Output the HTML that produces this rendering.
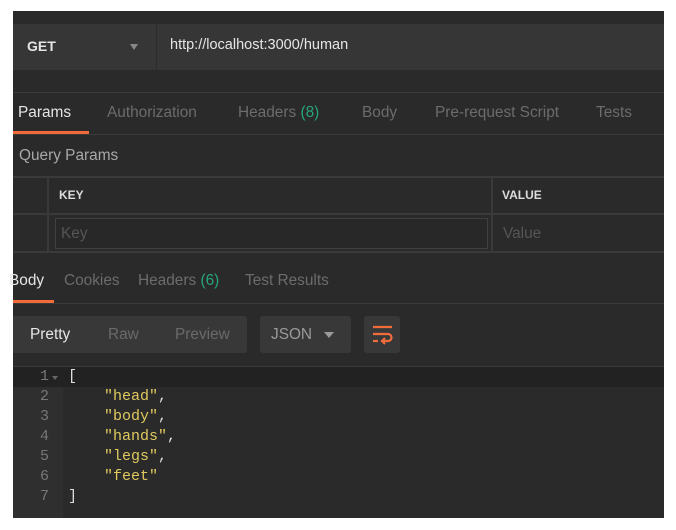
<!DOCTYPE html><html><head><style>
body{margin:0;width:676px;height:530px;background:#fff;position:relative;overflow:hidden;font-family:"Liberation Sans",sans-serif;}
.a{position:absolute}
.t{position:absolute;white-space:nowrap;font-size:15.4px;color:#6c6c6c}
.code{font-family:"Liberation Mono",monospace;font-size:15px;}
</style></head><body>
<div class="a" style="left:13px;top:11px;width:651px;height:507px;background:#2a2a2a"></div>
<div class="a" style="left:13px;top:24px;width:651px;height:46px;background:#363636"></div>
<div class="a" style="left:156px;top:24px;width:1px;height:46px;background:#2c2c2c"></div>
<div class="t" style="left:27px;top:38px;color:#e6e6e6;font-weight:bold;font-size:14px">GET</div>
<div class="a" style="left:130px;top:44px;border-left:4px solid transparent;border-right:4px solid transparent;border-top:6px solid #888"></div>
<div class="t" style="left:170px;top:37px;color:#e6e6e6;font-size:14.5px">http://localhost:3000/human</div>
<div class="a" style="left:13px;top:92px;width:651px;height:1px;background:#3a3a3a"></div>
<div class="t" style="left:18px;top:104px;color:#e6e6e6">Params</div>
<div class="t" style="left:107px;top:104px">Authorization</div>
<div class="t" style="left:238px;top:104px">Headers <span style="color:#26a77a">(8)</span></div>
<div class="t" style="left:362px;top:104px">Body</div>
<div class="t" style="left:435px;top:104px">Pre-request Script</div>
<div class="t" style="left:596px;top:104px">Tests</div>
<div class="a" style="left:13px;top:131px;width:76px;height:3px;background:#f26b3a"></div>
<div class="a" style="left:13px;top:134px;width:651px;height:1px;background:#3a3a3a"></div>
<div class="t" style="left:19px;top:147px;color:#a8a8a8">Query Params</div>
<div class="a" style="left:13px;top:176px;width:651px;height:2px;background:#3a3a3a"></div>
<div class="a" style="left:47px;top:176px;width:2px;height:76px;background:#3a3a3a"></div>
<div class="a" style="left:491px;top:176px;width:2px;height:76px;background:#3a3a3a"></div>
<div class="t" style="left:59px;top:188px;color:#dcdcdc;font-weight:bold;font-size:12px">KEY</div>
<div class="t" style="left:502px;top:188px;color:#dcdcdc;font-weight:bold;font-size:12px">VALUE</div>
<div class="a" style="left:13px;top:213px;width:651px;height:2px;background:#3a3a3a"></div>
<div class="a" style="left:55px;top:218px;width:433px;height:31px;border:1px solid #404040;box-sizing:border-box;background:#282828"></div>
<div class="t" style="left:61px;top:225px;color:#555">Key</div>
<div class="t" style="left:503px;top:225px;color:#555">Value</div>
<div class="a" style="left:13px;top:251px;width:651px;height:2px;background:#3a3a3a"></div>
<div class="t" style="left:9px;top:272px;color:#e6e6e6">Body</div>
<div class="t" style="left:64px;top:272px">Cookies</div>
<div class="t" style="left:138px;top:272px">Headers <span style="color:#26a77a">(6)</span></div>
<div class="t" style="left:245px;top:272px">Test Results</div>
<div class="a" style="left:13px;top:300px;width:41px;height:3px;background:#f26b3a"></div>
<div class="a" style="left:13px;top:303px;width:651px;height:1px;background:#3a3a3a"></div>
<div class="a" style="left:13px;top:316px;width:234px;height:37px;background:#383838;border-radius:0 3px 3px 0"></div>
<div class="t" style="left:30px;top:326px;color:#e6e6e6">Pretty</div>
<div class="t" style="left:108px;top:326px;color:#6a6a6a">Raw</div>
<div class="t" style="left:175px;top:326px;color:#6a6a6a">Preview</div>
<div class="a" style="left:260px;top:316px;width:91px;height:37px;background:#383838;border-radius:3px"></div>
<div class="t" style="left:271px;top:326px;color:#9a9a9a">JSON</div>
<div class="a" style="left:324px;top:332px;border-left:5px solid transparent;border-right:5px solid transparent;border-top:6px solid #9a9a9a"></div>
<div class="a" style="left:364px;top:316px;width:36px;height:37px;background:#383838;border-radius:3px"></div>
<svg class="a" style="left:372px;top:325px" width="22" height="20" viewBox="0 0 22 20" fill="none" stroke="#f26b3a" stroke-width="2.2"><path d="M1 2H20"/><path d="M1 9H16a3.5 3.5 0 0 1 0 7H11"/><path d="M13 13l-3 3 3 3"/><path d="M1 16H6"/></svg>
<div class="a" style="left:13px;top:366px;width:651px;height:1px;background:#3a3a3a"></div>
<div class="a" style="left:13px;top:367px;width:50px;height:151px;background:#2f2f2f"></div>
<div class="a" style="left:13px;top:367px;width:651px;height:20px;background:#222"></div>
<div class="a code" style="left:13px;top:367px;width:36px;text-align:right;color:#777;line-height:20px">1<br>2<br>3<br>4<br>5<br>6<br>7</div>
<div class="a" style="left:52px;top:376px;border-left:3px solid transparent;border-right:3px solid transparent;border-top:4px solid #666"></div>
<div class="a code" style="left:68px;top:367px;color:#e0c95f;line-height:20px;white-space:pre"><span style="color:#ddd">[</span>
    "head"<span style="color:#ddd">,</span>
    "body"<span style="color:#ddd">,</span>
    "hands"<span style="color:#ddd">,</span>
    "legs"<span style="color:#ddd">,</span>
    "feet"
<span style="color:#ddd">]</span></div>
</body></html>
